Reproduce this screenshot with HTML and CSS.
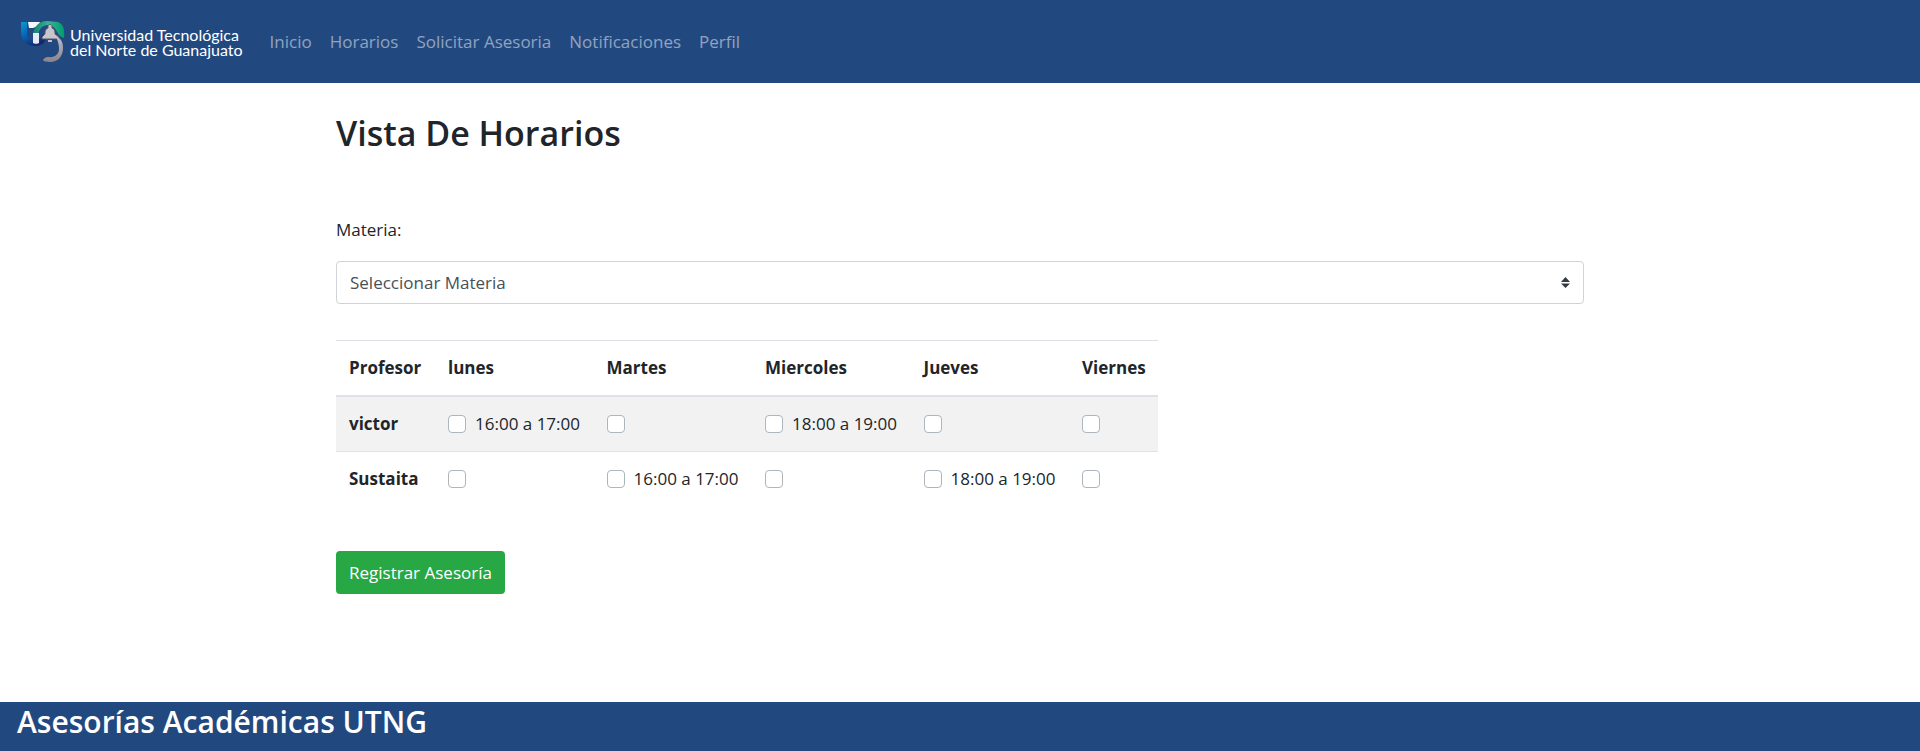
FILE: index.html
```html
<!DOCTYPE html>
<html lang="es">
<head>
<meta charset="utf-8">
<meta name="viewport" content="width=device-width, initial-scale=1">
<title>Vista De Horarios</title>
<link rel="stylesheet" href="styles.css">
</head>
<body>
<header class="navbar">
  <a class="brand" href="#">
    <svg class="brand-mark" width="46" height="44" viewBox="0 0 46 44" aria-hidden="true">
      <defs>
        <linearGradient id="blue" x1="0" y1="0" x2=".6" y2="1"><stop offset="0" stop-color="#0a9ad2"/><stop offset=".45" stop-color="#0668b8"/><stop offset="1" stop-color="#14246e"/></linearGradient>
        <linearGradient id="green" x1="0" y1="0" x2="1" y2="0"><stop offset="0" stop-color="#17806e"/><stop offset=".5" stop-color="#35b596"/><stop offset="1" stop-color="#009c6c"/></linearGradient>
        <linearGradient id="grey" x1="0" y1="0" x2="0" y2="1"><stop offset="0" stop-color="#b9bdc9"/><stop offset="1" stop-color="#8c8389"/></linearGradient>
      </defs>
      <path fill="url(#blue)" d="M1 2h6v11c0 5 3 8 8 8 4 0 6-3 7-7l4 4c-1 5-5 8-11 8C6 26 1 20 1 12z"/>
      <path fill="#f4f7fb" d="M8 2h12l-2 4-5 2H9z"/>
      <path fill="url(#green)" d="M13 13C15 5 20 1 27 1l11 1c5 2 7 7 6 16-4-1-6-4-8-8-3-5-8-6-12-4-3 1-5 4-6 8z"/>
      <path fill="#e4ebf6" d="M13 13h6v10c-1 1-5 1-6 0z"/>
      <path fill="#c9c5cd" stroke="#55566a" d="M28 6c0-2 4-2 4 0v2c3 1 3 4 3 6l4 3v2H22v-2l3-3c0-2 0-5 3-6z"/>
      <path fill="#c4c0c9" d="M28 20h4v2h-4z"/>
      <path fill="url(#grey)" d="M36 17c5 1 7 5 7 11 0 9-6 14-12 14-5 0-8-1-8-2 1-2 3-3 5-3 7 1 11-3 11-8 0-4-1-8-3-12z"/>
    </svg>
    <span class="brand-name">Universidad Tecnológica<br>del Norte de Guanajuato</span>
  </a>
  <nav class="links" aria-label="Principal">
    <a href="#">Inicio</a>
    <a href="#">Horarios</a>
    <a href="#">Solicitar Asesoria</a>
    <a href="#">Notificaciones</a>
    <a href="#">Perfil</a>
  </nav>
</header>
<main class="content">
  <h1 class="title">Vista De Horarios</h1>
  <form class="form">
    <label class="field-label" for="materia">Materia:</label>
    <div class="select-wrap">
      <select class="select" id="materia"><option>Seleccionar Materia</option></select>
      <svg class="select-arrows" width="9" height="11" viewBox="0 0 9 11" aria-hidden="true"><path fill="#343a40" d="M0 5h9L4.500 0zM0 6.500h9L4.500 11z"/></svg>
    </div>
    <table class="schedule">
      <colgroup><col class="col-name"><col><col><col><col><col class="col-last"></colgroup>
      <thead>
        <tr><th scope="col">Profesor</th><th scope="col">lunes</th><th scope="col">Martes</th><th scope="col">Miercoles</th><th scope="col">Jueves</th><th scope="col">Viernes</th></tr>
      </thead>
      <tbody>
        <tr>
          <th scope="row">victor</th>
          <td><label class="slot"><input type="checkbox"><span>16:00 a 17:00</span></label></td>
          <td><label class="slot"><input type="checkbox" aria-label="victor, Martes"></label></td>
          <td><label class="slot"><input type="checkbox"><span>18:00 a 19:00</span></label></td>
          <td><label class="slot"><input type="checkbox" aria-label="victor, Jueves"></label></td>
          <td><label class="slot"><input type="checkbox" aria-label="victor, Viernes"></label></td>
        </tr>
        <tr>
          <th scope="row">Sustaita</th>
          <td><label class="slot"><input type="checkbox" aria-label="Sustaita, lunes"></label></td>
          <td><label class="slot"><input type="checkbox"><span>16:00 a 17:00</span></label></td>
          <td><label class="slot"><input type="checkbox" aria-label="Sustaita, Miercoles"></label></td>
          <td><label class="slot"><input type="checkbox"><span>18:00 a 19:00</span></label></td>
          <td><label class="slot"><input type="checkbox" aria-label="Sustaita, Viernes"></label></td>
        </tr>
      </tbody>
    </table>
    <button class="submit" type="button">Registrar Asesoría</button>
  </form>
</main>
<footer class="footer"><h2 class="footer-title">Asesorías Académicas UTNG</h2></footer>
</body>
</html>
```
FILE: styles.css
```css
* { box-sizing: border-box; }
body {
  margin: 0;
  min-height: 100vh;
  display: flex;
  flex-direction: column;
  background: #fff;
  color: #212529;
  font: 17px/27px "Open Sans", "Noto Sans", sans-serif;
}
.navbar {
  display: flex;
  align-items: center;
  gap: 18px;
  padding: 19px 20px;
  background: #224880;
}
.brand {
  display: flex;
  align-items: center;
  gap: 4px;
  color: #fff;
  text-decoration: none;
}
.brand-mark { flex: none; }
.brand-name {
  font: 16px/15px Lato, sans-serif;
  white-space: nowrap;
}
.links { display: flex; flex-wrap: wrap; }
.links a {
  padding: 9px;
  color: rgba(255, 255, 255, .5);
  text-decoration: none;
}
.content { width: 65%; margin: 0 auto; padding: 29px 0; }
.title { margin: 0; font-size: 34px; line-height: 42px; font-weight: 600; }
.form { display: flex; flex-direction: column; align-items: flex-start; }
.field-label { margin: 62px 0 18px; }
.select-wrap { position: relative; width: 100%; }
.select {
  display: block;
  width: 100%;
  height: 43px;
  padding: 0 32px 0 13px;
  appearance: none;
  border: 1px solid #ced4da;
  border-radius: 4px;
  background: #fff;
  color: #495057;
  font: inherit;
}
.select-arrows { position: absolute; right: 14px; top: 16px; pointer-events: none; }
.schedule {
  width: 822px;
  max-width: 100%;
  margin: 36px 0 45px;
  table-layout: fixed;
  border-collapse: collapse;
}
.col-name { width: 99px; }
.col-last { width: 89px; }
.schedule th, .schedule td {
  padding: 13px 0 14px 13px;
  border-top: 1px solid #dee2e6;
  text-align: left;
  white-space: nowrap;
}
.schedule thead th { border-bottom: 2px solid #dee2e6; }
.schedule tbody tr:first-child { background: #f2f2f2; }
.slot { display: flex; align-items: center; gap: 9px; }
.slot input {
  width: 18px;
  height: 18px;
  margin: 0;
  appearance: none;
  border: 1px solid #adb5bd;
  border-radius: 4px;
  background: #fff;
}
.slot input:checked { background: #007bff; }
.submit {
  height: 43px;
  padding: 0 13px;
  border: 0;
  border-radius: 4px;
  background: #28a745;
  color: #fff;
  font: inherit;
}
.footer { margin-top: auto; padding: 0 17px 9px; background: #224880; color: #fff; }
.footer-title { margin: 0; font-size: 30px; line-height: 40px; font-weight: 600; }
```
